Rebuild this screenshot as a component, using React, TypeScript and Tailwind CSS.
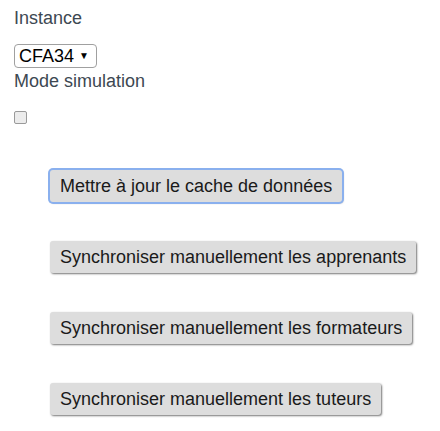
import React from "react";

const btn =
  "h-[32px] rounded-[3px] bg-[#dddddd] pl-[10px] pr-[10px] text-[18px] leading-[20px] text-[#1a1a1a] shadow-[1px_1px_2px_#777] text-left";

export default function App() {
  return (
    <div className="w-[440px] h-[431px] bg-white px-[14px] pt-[6px] text-[18px] text-[#3d4852]" style={{ fontFamily: '"Liberation Sans", Arial, sans-serif' }}>
      <div className="leading-[24px]">Instance</div>
      <div className="relative mt-[14px] inline-block align-top">
        <select className="block h-[24px] w-[83px] appearance-none rounded-[4px] border border-[#a0a0a0] bg-white pl-[4px] text-[18px] leading-[20px] text-black outline-none">
          <option>CFA34</option>
        </select>
        <span className="pointer-events-none absolute right-[8px] top-[6px] text-[10px] leading-[12px] text-black">▼</span>
      </div>
      <div className="leading-[24px] mt-[1px]">Mode simulation</div>
      <div className="mt-[18px] h-[13px]">
        <input type="checkbox" className="m-0 block h-[13px] w-[13px] appearance-none rounded-[2px] border border-[#9a9a9a] bg-[#ececec]" />
      </div>
      <div className="ml-[36px] mt-[46px] flex flex-col items-start gap-[39px]">
        <button className={btn + " ring-2 ring-[#8ab0ee]"}>Mettre à jour le cache de données</button>
        <button className={btn}>Synchroniser manuellement les apprenants</button>
        <button className={btn}>Synchroniser manuellement les formateurs</button>
        <button className={btn}>Synchroniser manuellement les tuteurs</button>
      </div>
    </div>
  );
}
